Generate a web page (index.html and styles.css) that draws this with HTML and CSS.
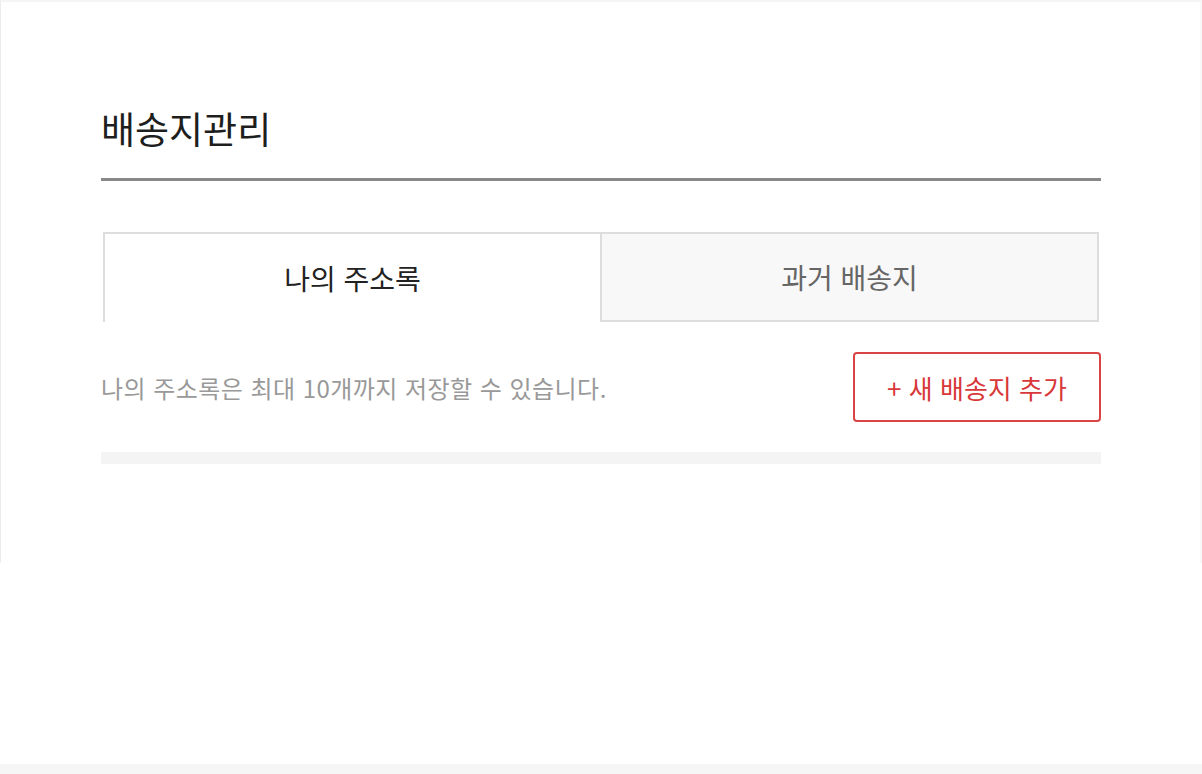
FILE: index.html
```html
<!DOCTYPE html>
<html lang="ko">
<head>
    <meta charset="utf-8">
    <title>배송지관리</title>
    <link rel="stylesheet" href="styles.css">
</head>
<body>
    <div class="page">
        <div class="frame">
            <div class="content">
                <h1 class="title">배송지관리</h1>
                <!-- tabs -->
                <div class="tabs">
                    <div class="tab active">나의 주소록</div>
                    <div class="tab">과거 배송지</div>
                </div>
                <!-- notice + add button -->
                <div class="toolbar">
                    <p class="notice">나의 주소록은 최대 10개까지 저장할 수 있습니다.</p>
                    <button class="add-button">+ 새 배송지 추가</button>
                </div>
                <div class="list-empty"></div>
            </div>
        </div>
        <div class="footer"></div>
    </div>
</body>
</html>
```
FILE: styles.css
```css
html, body {
    margin: 0;
    padding: 0;
    background-color: #fff;
    font-family: "Noto Sans CJK KR", "Noto Sans", sans-serif;
}
.page {
    display: flex;
    flex-direction: column;
    min-height: 774px;
}
.frame {
    height: 561px;
    border-top: 2px solid #f5f5f5;
    border-left: 1px solid #ececec;
    border-right: 2px solid #f8f8f8;
}
.content {
    width: 1000px;
    margin-left: 100px;
}
.title {
    margin: 0;
    padding-top: 101px;
    padding-bottom: 25px;
    font-size: 37px;
    font-weight: 400;
    line-height: 50px;
    color: #1e1e1e;
    border-bottom: 3px solid #888;
}
.tabs {
    display: flex;
    margin: 51px 2px 0;
    height: 90px;
}
.tab {
    flex: 1;
    display: flex;
    align-items: center;
    justify-content: center;
    font-size: 28px;
    color: #666;
    background-color: #f8f8f8;
    border: 2px solid #ddd;
}
.tab.active {
    color: #222;
    background-color: #fff;
    border-right: none;
    border-bottom: none;
}
.toolbar {
    display: flex;
    align-items: center;
    justify-content: space-between;
    margin-top: 30px;
}
.notice {
    margin: 0;
    font-size: 24px;
    letter-spacing: 0.45px;
    color: #999;
}
.add-button {
    width: 248px;
    height: 70px;
    font-family: "Noto Sans CJK KR", "Noto Sans", sans-serif;
    font-size: 26px;
    color: #d8383a;
    background-color: #fff;
    border: 2px solid #d94545;
    border-radius: 4px;
    cursor: pointer;
}
.list-empty {
    margin-top: 30px;
    height: 12px;
    background-color: #f4f4f4;
}
.footer {
    margin-top: auto;
    height: 10px;
    background-color: #f6f6f6;
}
```
